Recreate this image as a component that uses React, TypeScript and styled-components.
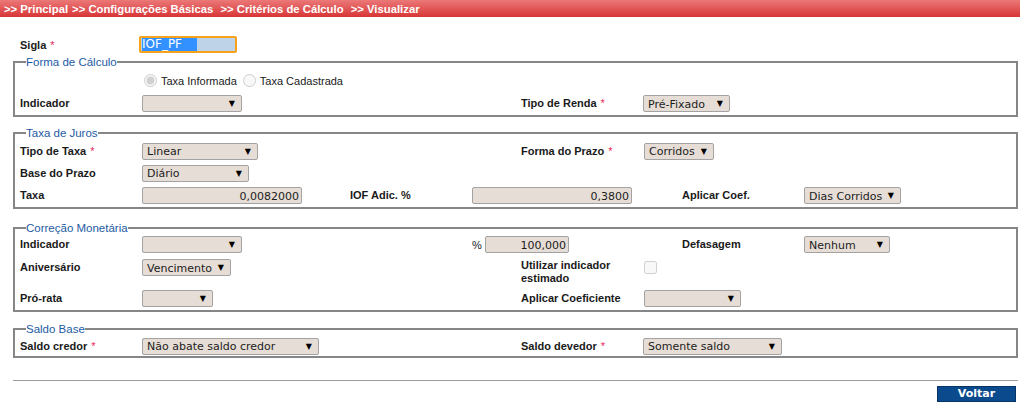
import React from 'react'
import styled, { createGlobalStyle } from 'styled-components'

const GlobalStyle = createGlobalStyle`
  html, body {
    margin: 0;
    padding: 0;
    background: #fff;
  }
  body {
    font-family: 'Liberation Sans', Arial, sans-serif;
    color: #1a1a1a;
  }
`

const Breadcrumb = styled.div`
  height: 17px;
  display: flex;
  align-items: center;
  padding-left: 4px;
  background: linear-gradient(#eb7878, #d83636);
  color: #fff;
  font: bold 11.3px 'Liberation Sans', Arial, sans-serif;
  white-space: pre;
`

const Crumb = styled.span`
  margin-right: 4px;
`

const Content = styled.div`
  padding: 0 2px 0 13px;
`

const SiglaRow = styled.div`
  display: flex;
  align-items: center;
  height: 21px;
  margin-top: 17px;
  padding-left: 20px;
`

const SiglaLabel = styled.span`
  width: 119px;
  font: bold 11px 'Liberation Sans', Arial, sans-serif;
`

const SiglaInput = styled.div`
  width: 98px;
  height: 17px;
  box-sizing: border-box;
  border: 2px solid #f7a21b;
  border-radius: 2px;
  background: #bfd3e8;
  display: flex;
  align-items: center;
  padding-left: 1px;
`

const Selection = styled.span`
  display: inline-block;
  width: 55px;
  background: #3390ff;
  color: #fff;
  font: 12px 'DejaVu Sans', Verdana, sans-serif;
  line-height: 13px;
`

const Fieldset = styled.fieldset<{ $mt: number }>`
  margin: ${p => p.$mt}px 0 0;
  padding: 0 0 0 5px;
  border: 2px solid #868686;
  min-width: 0;
`

const Legend = styled.legend`
  margin-left: 6px;
  padding: 0;
  font: 11.5px 'Liberation Sans', Arial, sans-serif;
  line-height: 14px;
  height: 14px;
  color: #1d5aa3;
`

const Row = styled.div<{ $h: number; $top?: boolean }>`
  display: grid;
  grid-template-columns: 122px 208px 122px 49px 122px 39px 122px 1fr;
  height: ${p => p.$h}px;
  box-sizing: border-box;
  align-items: ${p => (p.$top ? 'start' : 'center')};
  padding-top: ${p => (p.$top ? 5 : 0)}px;
`

const Cell = styled.div<{ $c: number; $s?: number; $pl?: number }>`
  grid-column: ${p => p.$c} / span ${p => p.$s ?? 1};
  display: flex;
  align-items: center;
  min-height: 17px;
  padding-left: ${p => p.$pl ?? 0}px;
`

const Label = styled.span`
  font: bold 11px 'Liberation Sans', Arial, sans-serif;
  line-height: 13px;
  color: #1a1a1a;
`

const Req = styled.span`
  color: #e8285a;
  font-weight: normal;
  margin-left: 4px;
`

const SelectBox = styled.div<{ $w: number }>`
  width: ${p => p.$w}px;
  height: 17px;
  box-sizing: border-box;
  display: flex;
  align-items: center;
  justify-content: space-between;
  padding: 1px 6px 0 4px;
  border: 1px solid #a3a3a3;
  border-radius: 2px;
  background: #e6ded6;
  font: 11px 'DejaVu Sans', Verdana, sans-serif;
  color: #1c1c1c;
  white-space: nowrap;
`

const Arrow = styled.span`
  font-size: 8px;
  color: #000;
  margin-top: -1px;
`

const NumInput = styled.div<{ $w: number }>`
  width: ${p => p.$w}px;
  height: 17px;
  box-sizing: border-box;
  display: flex;
  align-items: center;
  justify-content: flex-end;
  padding: 1px 2px 0 0;
  border: 1px solid #a3a3a3;
  border-radius: 2px;
  background: #e6ded6;
  font: 11px 'DejaVu Sans', Verdana, sans-serif;
  color: #1c1c1c;
`

const Pct = styled.span`
  font: 11px 'Liberation Sans', Arial, sans-serif;
  width: 13px;
`

const Radio = styled.input`
  width: 13px;
  height: 13px;
  margin: 0 4px 0 2px;
`

const RadioText = styled.span`
  font: 11px 'Liberation Sans', Arial, sans-serif;
  margin-right: 4px;
`

const Check = styled.input`
  width: 13px;
  height: 13px;
  margin: 0 0 0 1px;
`

const Divider = styled.div`
  margin: 22px 2px 0 13px;
  border-top: 1px solid #9c9c9c;
`

const Footer = styled.div`
  display: flex;
  justify-content: flex-end;
  padding: 5px 4px 0 0;
`

const Button = styled.button`
  width: 79px;
  height: 16px;
  padding: 0;
  border: 1px solid #063466;
  background: #0c4a8e;
  color: #fff;
  font: bold 11px 'DejaVu Sans', Verdana, sans-serif;
  line-height: 14px;
`

const Select = ({ w, value = '' }: { w: number; value?: string }) => (
  <SelectBox $w={w}>
    <span>{value}</span>
    <Arrow>▼</Arrow>
  </SelectBox>
)

const App: React.FC = () => {
  return (
    <>
      <GlobalStyle />
      <Breadcrumb>
        <Crumb>&gt;&gt; Principal</Crumb>
        <Crumb>&gt;&gt; Configurações Básicas </Crumb>
        <Crumb>&gt;&gt; Critérios de Cálculo </Crumb>
        <Crumb>&gt;&gt; Visualizar</Crumb>
      </Breadcrumb>

      <SiglaRow>
        <SiglaLabel>
          Sigla<Req>*</Req>
        </SiglaLabel>
        <SiglaInput>
          <Selection>IOF_PF</Selection>
        </SiglaInput>
      </SiglaRow>

      <Content>
        <Fieldset $mt={0}>
          <Legend>Forma de Cálculo</Legend>
          <Row $h={23}>
            <Cell $c={2} $s={2}>
              <Radio type="radio" name="forma" disabled defaultChecked />
              <RadioText>Taxa Informada</RadioText>
              <Radio type="radio" name="forma" disabled />
              <RadioText>Taxa Cadastrada</RadioText>
            </Cell>
          </Row>
          <Row $h={23}>
            <Cell $c={1}>
              <Label>Indicador</Label>
            </Cell>
            <Cell $c={2}>
              <Select w={100} />
            </Cell>
            <Cell $c={5}>
              <Label>
                Tipo de Renda<Req>*</Req>
              </Label>
            </Cell>
            <Cell $c={6} $s={2}>
              <Select w={87} value="Pré-Fixado" />
            </Cell>
          </Row>
        </Fieldset>

        <Fieldset $mt={9}>
          <Legend>Taxa de Juros</Legend>
          <Row $h={22}>
            <Cell $c={1}>
              <Label>
                Tipo de Taxa<Req>*</Req>
              </Label>
            </Cell>
            <Cell $c={2}>
              <Select w={116} value="Linear" />
            </Cell>
            <Cell $c={5}>
              <Label>
                Forma do Prazo<Req>*</Req>
              </Label>
            </Cell>
            <Cell $c={6} $s={2} $pl={1}>
              <Select w={70} value="Corridos" />
            </Cell>
          </Row>
          <Row $h={22}>
            <Cell $c={1}>
              <Label>Base do Prazo</Label>
            </Cell>
            <Cell $c={2}>
              <Select w={107} value="Diário" />
            </Cell>
          </Row>
          <Row $h={23}>
            <Cell $c={1}>
              <Label>Taxa</Label>
            </Cell>
            <Cell $c={2}>
              <NumInput $w={160}>0,0082000</NumInput>
            </Cell>
            <Cell $c={3}>
              <Label>IOF Adic. %</Label>
            </Cell>
            <Cell $c={4} $s={2}>
              <NumInput $w={160}>0,3800</NumInput>
            </Cell>
            <Cell $c={7}>
              <Label>Aplicar Coef.</Label>
            </Cell>
            <Cell $c={8}>
              <Select w={97} value="Dias Corridos" />
            </Cell>
          </Row>
        </Fieldset>

        <Fieldset $mt={12}>
          <Legend>Correção Monetária</Legend>
          <Row $h={19}>
            <Cell $c={1}>
              <Label>Indicador</Label>
            </Cell>
            <Cell $c={2}>
              <Select w={100} />
            </Cell>
            <Cell $c={4} $s={2}>
              <Pct>%</Pct>
              <NumInput $w={84}>100,000</NumInput>
            </Cell>
            <Cell $c={7}>
              <Label>Defasagem</Label>
            </Cell>
            <Cell $c={8}>
              <Select w={86} value="Nenhum" />
            </Cell>
          </Row>
          <Row $h={33} $top>
            <Cell $c={1}>
              <Label>Aniversário</Label>
            </Cell>
            <Cell $c={2}>
              <Select w={89} value="Vencimento" />
            </Cell>
            <Cell $c={5}>
              <Label>
                Utilizar indicador
                <br />
                estimado
              </Label>
            </Cell>
            <Cell $c={6}>
              <Check type="checkbox" disabled />
            </Cell>
          </Row>
          <Row $h={23}>
            <Cell $c={1}>
              <Label>Pró-rata</Label>
            </Cell>
            <Cell $c={2}>
              <Select w={71} />
            </Cell>
            <Cell $c={5}>
              <Label>Aplicar Coeficiente</Label>
            </Cell>
            <Cell $c={6} $s={2} $pl={1}>
              <Select w={97} />
            </Cell>
          </Row>
        </Fieldset>

        <Fieldset $mt={10}>
          <Legend>Saldo Base</Legend>
          <Row $h={20}>
            <Cell $c={1}>
              <Label>
                Saldo credor<Req>*</Req>
              </Label>
            </Cell>
            <Cell $c={2}>
              <Select w={177} value="Não abate saldo credor" />
            </Cell>
            <Cell $c={5}>
              <Label>
                Saldo devedor<Req>*</Req>
              </Label>
            </Cell>
            <Cell $c={6} $s={3}>
              <Select w={139} value="Somente saldo" />
            </Cell>
          </Row>
        </Fieldset>
      </Content>

      <Divider />
      <Footer>
        <Button>Voltar</Button>
      </Footer>
    </>
  )
}

export default App
